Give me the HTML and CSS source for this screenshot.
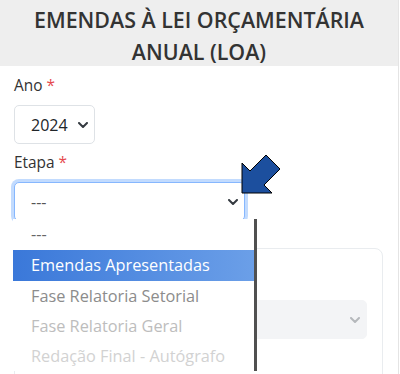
FILE: index.html
```html
<!DOCTYPE html>
<html lang="pt-BR">
<head>
  <meta charset="UTF-8" />
  <meta name="viewport" content="width=device-width, initial-scale=1.0" />
  <title>Emendas à LOA</title>
  <link rel="stylesheet" href="styles.css">
</head>
<body>
  <div class="page">
    <div class="title-bar">
      <h1>EMENDAS À LEI ORÇAMENTÁRIA ANUAL (LOA)</h1>
    </div>

    <div class="form">
      <div class="field">
        <label>Ano <span class="req">*</span></label>
        <div class="select select-ano">
          <span>2024</span>
          <svg class="chev" width="10" height="6" viewBox="0 0 10 6"><polyline points="1,1 5,5 9,1" fill="none" stroke="#343a40" stroke-width="2" stroke-linecap="round" stroke-linejoin="round"/></svg>
        </div>
      </div>

      <div class="field">
        <label>Etapa <span class="req">*</span></label>
        <div class="select select-etapa focused">
          <span class="muted">---</span>
          <svg class="chev" width="10" height="6" viewBox="0 0 10 6"><polyline points="1,1 5,5 9,1" fill="none" stroke="#343a40" stroke-width="2" stroke-linecap="round" stroke-linejoin="round"/></svg>

          <ul class="dropdown">
            <li class="opt-0">---</li>
            <li class="active">Emendas Apresentadas</li>
            <li class="opt-1">Fase Relatoria Setorial</li>
            <li class="opt-2">Fase Relatoria Geral</li>
            <li class="opt-3">Redação Final - Autógrafo</li>
          </ul>

          <svg class="pointer" width="46" height="46" viewBox="0 0 46 46">
            <polygon points="3,41 3,11 11,19 27,3 41,17 25,33 33,41" fill="#1c4f9e" stroke="#000" stroke-width="1" stroke-linejoin="miter"/>
          </svg>
        </div>
      </div>

      <div class="card">
        <div class="select disabled">
          <span></span>
          <svg class="chev" width="10" height="6" viewBox="0 0 10 6"><polyline points="1,1 5,5 9,1" fill="none" stroke="#b5b8bc" stroke-width="2" stroke-linecap="round" stroke-linejoin="round"/></svg>
        </div>
      </div>
    </div>
  </div>
</body>
</html>
```

FILE: styles.css
```css
* { box-sizing: border-box; }
body {
  margin: 0;
  font-family: "Open Sans", "Noto Sans", sans-serif;
  color: #212529;
  background: #fff;
}
.page {
  position: relative;
  width: 399px;
  height: 374px;
  overflow: hidden;
  border-right: 1px solid #e4e4e4;
}
.title-bar {
  background: #eeeeee;
  height: 66px;
  padding: 4px 30px 0;
}
.title-bar h1 {
  margin: 0;
  font-size: 21.4px;
  font-weight: 600;
  line-height: 32px;
  text-align: center;
  color: #333;
}
.form {
  padding: 9px 14px 0;
}
.field label {
  display: block;
  font-size: 15.4px;
  line-height: 22px;
  color: #333;
  margin-bottom: 8px;
}
.req {
  color: #e5484d;
}
.select {
  position: relative;
  display: flex;
  align-items: center;
  justify-content: space-between;
  height: 39px;
  padding: 0 6px 0 16px;
  border: 1px solid #dee2e6;
  border-radius: 5px;
  font-size: 16px;
  background: #fff;
}
.select-ano {
  width: 81px;
  margin-bottom: 8px;
}
.select-etapa {
  width: 231px;
}
.select.focused {
  border-color: #86b7fe;
  box-shadow: 0 0 0 3px rgba(13, 110, 253, 0.25);
}
.muted {
  color: #555;
}
.chev {
  display: block;
}
.dropdown {
  position: absolute;
  top: 36px;
  left: -2px;
  width: 244px;
  margin: 0;
  padding: 0;
  list-style: none;
  background: #fff;
  border-right: 3px solid #505050;
  z-index: 5;
}
.dropdown li {
  height: 30px;
  line-height: 30px;
  padding-left: 18px;
  font-size: 16.3px;
  white-space: nowrap;
}
.dropdown .opt-0 {
  height: 31px;
  line-height: 31px;
  color: #666;
}
.dropdown .active {
  height: 31px;
  line-height: 31px;
  color: #fff;
  background: linear-gradient(to right, #3a78d9, #6b9fe8);
}
.dropdown .opt-1 { color: #8c8c8c; }
.dropdown .opt-2 { color: #bdbdbd; }
.dropdown .opt-3 { color: #d2d2d2; }
.pointer {
  position: absolute;
  left: 224px;
  top: -31px;
  z-index: 6;
}
.card {
  margin-top: 27px;
  margin-right: 1px;
  height: 140px;
  padding: 51px 15px 0;
  border: 1px solid #e9ecef;
  border-radius: 8px;
}
.select.disabled {
  background: #f3f4f6;
  border-color: #f3f4f6;
}
```
